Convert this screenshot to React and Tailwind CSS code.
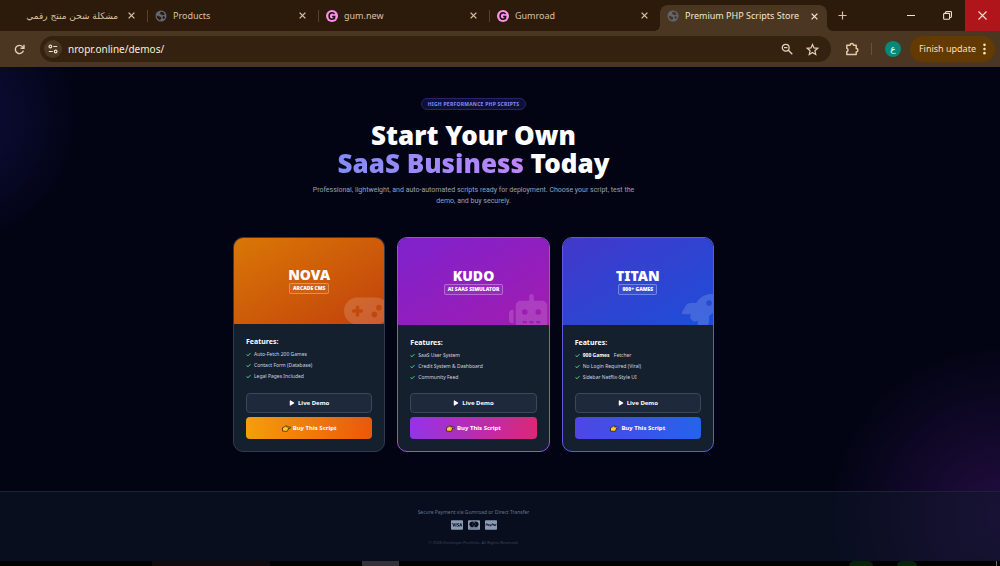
import React from "react";
import {
  FaGamepad,
  FaRobot,
  FaRocket,
  FaCheck,
  FaPlay,
  FaCcVisa,
  FaCcMastercard,
  FaCcPaypal,
} from "react-icons/fa6";

function CloseGlyph({ className = "size-[7px]" }) {
  return (
    <svg viewBox="0 0 8 8" className={className} fill="none" stroke="currentColor" strokeWidth="1.5">
      <path d="M0.7 0.7 7.3 7.3M7.3 0.7 0.7 7.3" />
    </svg>
  );
}

function GlobeIcon() {
  return (
    <svg viewBox="0 0 24 24" className="size-[12px] shrink-0" fill="#5f6873">
      <path d="M12 1a11 11 0 1 0 0 22 11 11 0 0 0 0-22zM3.5 10.5c1.500 1.800 3.500 2 5 2.200 1.300.3 1.700 1.300 3 1.500 1.500.4 1.600 1.500.6 2.600-.8.9-1 1.900-1.600 3.500C6 19.500 3 15.500 3.500 10.500zM13 3.600c3 .3 5.600 2.400 6.800 5.200-1.300 1.200-2.600.4-3.800 1.200-1.300 1-2.500.3-3.400-.8-.7-1-2.400-.6-2.800-2C9.400 5.500 11 4 13 3.600zM15.500 13c1.700-.8 3.300-.3 4.800 1-.6 1.800-1.800 3.400-3.400 4.500-1.200-1.500-2.600-4-1.400-5.500z" fillRule="evenodd" />
    </svg>
  );
}

function GumroadIcon() {
  return (
    <svg viewBox="0 0 24 24" className="size-[12px] shrink-0">
      <circle cx="12" cy="12" r="12" fill="#ff90e8" />
      <path d="M17 8.200C16 6.300 14.300 5.400 12.300 5.400 8.700 5.400 6.200 8.200 6.200 12s2.300 6.600 5.800 6.600c3 0 4.800-2 5.300-5.800h-5" fill="none" stroke="#1a0b16" strokeWidth="3" />
      <path d="M17.300 13v5.500" stroke="#1a0b16" strokeWidth="2" />
    </svg>
  );
}

const tabs = [
  { title: "Products", Icon: GlobeIcon },
  { title: "gum.new", Icon: GumroadIcon },
  { title: "Gumroad", Icon: GumroadIcon },
];

function TabStrip() {
  return (
    <div className="flex h-[31px] bg-[#2c1b0b] text-[9px] text-[#dcc0a0]">
      <div className="flex w-[147px] items-center justify-end gap-[10px] pr-[12px]">
        <span dir="rtl" lang="ar" className="truncate font-['DejaVu_Sans','Noto_Sans',sans-serif] leading-[16px]">
          مشكلة شحن منتج رقمي
        </span>
        <button aria-label="Close tab"><CloseGlyph /></button>
      </div>
      {tabs.map(({ title, Icon }) => (
        <div key={title} className="flex w-[171px] min-w-0 items-center">
          <span className="h-[12px] w-px bg-[#5a4228]" />
          <div className="flex min-w-0 flex-1 items-center gap-[6px] pr-[12px] pl-[7px]">
            <Icon />
            <span className="flex-1 truncate">{title}</span>
            <button aria-label={"Close " + title}><CloseGlyph /></button>
          </div>
        </div>
      ))}
      <div className="flex w-[167px] min-w-0 items-end">
        <div className="relative flex h-[26px] min-w-0 flex-1 items-center gap-[6px] rounded-t-[8px] bg-[#4b3621] pr-[9px] pb-[4px] pl-[7px] text-[#f3e4d3]">
          <span className="absolute bottom-0 left-[-6px] size-[6px] bg-[radial-gradient(circle_at_0_0,transparent_6px,#4b3621_6px)]" />
          <span className="absolute right-[-6px] bottom-0 size-[6px] bg-[radial-gradient(circle_at_100%_0,transparent_6px,#4b3621_6px)]" />
          <GlobeIcon />
          <span className="flex-1 whitespace-nowrap">Premium PHP Scripts Store</span>
          <button aria-label="Close Premium PHP Scripts Store"><CloseGlyph /></button>
        </div>
      </div>
      <button aria-label="New tab" className="ml-[11px]">
        <svg viewBox="0 0 10 10" className="size-[9px]" fill="none" stroke="currentColor" strokeWidth="1.300">
          <path d="M5 0.500v9M0.500 5h9" />
        </svg>
      </button>
      <div className="ml-auto flex text-[#f0e0d0]">
        <button aria-label="Minimize" className="flex w-[36px] items-center justify-center">
          <span className="h-px w-[8px] bg-current" />
        </button>
        <button aria-label="Restore" className="flex w-[36px] items-center justify-center">
          <svg viewBox="0 0 10 10" className="size-[9px]" fill="none" stroke="currentColor" strokeWidth="1.200">
            <rect x="0.700" y="2.600" width="6.600" height="6.600" rx="1" />
            <path d="M2.800 2.600V1.600a1 1 0 0 1 1-1h4.600a1 1 0 0 1 1 1v4.600a1 1 0 0 1-1 1h-1" />
          </svg>
        </button>
        <button aria-label="Close" className="flex w-[35px] items-center justify-center bg-[#b0151b]">
          <svg viewBox="0 0 9 9" className="size-[9px]" fill="none" stroke="currentColor" strokeWidth="1.100">
            <path d="M0.500 0.500 8.500 8.500M8.500 0.500 0.500 8.500" />
          </svg>
        </button>
      </div>
    </div>
  );
}

function Toolbar() {
  return (
    <div className="flex h-[36px] items-center bg-[#4b3621] pr-[5px] pl-[14px] text-[#dcc0a0]">
      <button aria-label="Reload" className="shrink-0">
        <svg viewBox="0 0 12 12" className="size-[11px]" fill="none" stroke="#e6d0b8" strokeWidth="1.500">
          <path d="M10.300 7.200A4.500 4.500 0 1 1 9.300 2.900L10.600 4.300" />
          <path d="M10.900 0.800v3.800H7.100" />
        </svg>
      </button>
      <div className="ml-[15px] flex h-[26px] flex-1 items-center rounded-full bg-[#34210f] pr-[12px] pl-[4px]">
        <button aria-label="View site information" className="flex size-[18px] shrink-0 items-center justify-center rounded-full bg-[#4b3621]">
          <svg viewBox="0 0 12 12" className="size-[10px]" fill="none" stroke="#f0e0d0" strokeWidth="1.400">
            <circle cx="2.800" cy="3" r="1.600" />
            <path d="M6.300 3H11M1 9h4.700" />
            <circle cx="9.200" cy="9" r="1.600" />
          </svg>
        </button>
        <input
          aria-label="Address"
          defaultValue="nropr.online/demos/"
          className="ml-[6px] min-w-0 flex-1 bg-transparent text-[10px] text-[#fbeede] outline-none"
        />
        <button aria-label="Zoom" className="shrink-0">
          <svg viewBox="0 0 12 12" className="size-[12px]" fill="none" stroke="#e6d0b8" strokeWidth="1.300">
            <circle cx="4.700" cy="4.700" r="3.400" />
            <path d="M7.300 7.300 11.300 11.300M3 4.700h3.400" />
          </svg>
        </button>
        <button aria-label="Bookmark" className="ml-[13px] shrink-0">
          <svg viewBox="0 0 24 24" className="size-[13px]" fill="none" stroke="#e6d0b8" strokeWidth="2.200">
            <path d="M12 2.800l2.800 6.300 6.900.7-5.200 4.600 1.500 6.800-6-3.600-6 3.600 1.500-6.800L2.300 9.800l6.900-.7z" />
          </svg>
        </button>
      </div>
      <button aria-label="Extensions" className="ml-[14px] shrink-0">
        <svg viewBox="0 0 14 14" className="size-[14px]" fill="none" stroke="#e6c8a4" strokeWidth="1.500">
          <path d="M1.800 3.200h3.300a1.700 1.700 0 0 1 3.400 0H11.200v3.300a1.700 1.700 0 0 1 0 3.400v2.700H1.800V9.700a1.800 1.800 0 0 0 0-3.400z" strokeLinejoin="round" />
        </svg>
      </button>
      <span className="ml-[12px] h-[12px] w-px bg-[#6b5237]" />
      <button aria-label="Profile" className="ml-[13px] flex size-[16px] shrink-0 items-center justify-center rounded-full bg-[#06897a] font-['DejaVu_Sans',sans-serif] text-[9px] leading-[9px] text-white">
        ع
      </button>
      <button className="ml-[9px] flex h-[26px] shrink-0 items-center gap-[7px] rounded-full bg-[#633a02] pr-[9px] pl-[9px] text-[9px] text-[#ffdfb5]">
        Finish update
        <svg viewBox="0 0 3 13" className="h-[12px] w-[3px]" fill="#ffdfb5">
          <circle cx="1.500" cy="2" r="1.400" />
          <circle cx="1.500" cy="6.500" r="1.400" />
          <circle cx="1.500" cy="11" r="1.400" />
        </svg>
      </button>
    </div>
  );
}

function PointingHand() {
  return (
    <svg viewBox="0 0 18 14" className="h-[7px] w-[9px] shrink-0" stroke="#1c1408" strokeWidth="1.400" strokeLinejoin="round">
      <path d="M1 5.500 5 3.500 8 1.500c1.400-.6 2.200.4 1.600 1.700L9 4h7c1.500 0 1.500 2.500 0 2.500h-4c1.200.6 1 2-.1 2.200.8.800.5 1.800-.5 2 .3 1-.3 1.800-1.400 1.800H5L1 12z" fill="#ffc928" />
    </svg>
  );
}

const products = [
  {
    name: "NOVA",
    label: "ARCADE CMS",
    Icon: FaGamepad,
    iconSize: "w-[45px]",
    border: "border-[#2f3c4e]",
    header: "h-[86px] from-[#d97706] to-[#c2410c]",
    buy: "from-[#f59e0b] to-[#ea580c]",
    features: ["Auto-Fetch 200 Games", "Contact Form (Database)", "Legal Pages Included"],
  },
  {
    name: "KUDO",
    label: "AI SAAS SIMULATOR",
    Icon: FaRobot,
    iconSize: "w-[45px]",
    border: "border-[#9a4fe0]",
    header: "h-[87px] from-[#7e22ce] to-[#a21caf]",
    buy: "from-[#9333ea] to-[#db2777]",
    features: ["SaaS User System", "Credit System & Dashboard", "Community Feed"],
  },
  {
    name: "TITAN",
    label: "900+ GAMES",
    Icon: FaRocket,
    iconSize: "w-[36px]",
    border: "border-[#5a5ce0]",
    header: "h-[87px] from-[#4338ca] to-[#1d4ed8]",
    buy: "from-[#4f46e5] to-[#2563eb]",
    features: [
      <><b className="mr-[3px] font-bold text-white">900 Games</b> Fetcher</>,
      "No Login Required (Viral)",
      "Sidebar Netflix-Style UI",
    ],
  },
];

function ProductCard({ name, label, Icon, iconSize, border, header, buy, features }) {
  return (
    <article className={"flex flex-col overflow-hidden rounded-[10px] border bg-[#15202f] " + border}>
      <div className={"relative flex flex-col items-center justify-center overflow-hidden bg-linear-to-br/srgb pb-[2px] " + header}>
        <h2 className="text-[14px] leading-[17px] font-black text-white">{name}</h2>
        <span className="rounded-[2px] border border-white/30 bg-white/5 px-[3px] text-[5px] leading-[9px] font-black text-white">
          {label}
        </span>
        <Icon className={"absolute right-[-5px] bottom-[-5px] h-[36px] text-white opacity-15 " + iconSize} />
      </div>
      <div className="flex flex-1 flex-col px-[12px] pt-[12px] pb-[12px]">
        <h3 className="text-[7px] leading-[11px] font-bold text-white">Features:</h3>
        <ul className="mt-[2px] mb-[10px] text-[5px] leading-[11px] text-[#cbd5e1]">
          {features.map((f, i) => (
            <li key={i} className="flex items-center gap-[3px]">
              <FaCheck className="size-[5px] shrink-0 text-[#4ade80]" />
              <span className="whitespace-nowrap">{f}</span>
            </li>
          ))}
        </ul>
        <a href="#demo" className="mt-auto flex h-[20px] items-center justify-center gap-[3px] rounded-[4px] border border-[#3a4759] bg-[#1e293b] text-[6px] font-bold text-white">
          <FaPlay className="size-[6px]" /> Live Demo
        </a>
        <a href="#buy" className={"mt-[4px] flex h-[22px] items-center justify-center gap-[2px] rounded-[4px] bg-linear-to-r/srgb text-[6px] font-bold text-white " + buy}>
          <PointingHand /> Buy This Script
        </a>
      </div>
    </article>
  );
}

export default function App() {
  return (
    <div className="flex min-h-screen flex-col bg-[#020414] font-['Noto_Sans','Open_Sans',sans-serif]">
      <header>
        <TabStrip />
        <Toolbar />
      </header>
      <div className="flex flex-1 flex-col bg-[radial-gradient(circle_130px_at_-50px_50px,#100f42,transparent),radial-gradient(circle_170px_at_100%_450px,#220d40,transparent)]">
        <main className="flex flex-1 flex-col items-center pt-[31px] pr-[53px] pb-[39px]">
          <span className="rounded-full border border-[#27246b] bg-[#0e1038] px-[6px] text-[5px] leading-[10px] font-bold tracking-wider text-[#818cf8]">
            HIGH PERFORMANCE PHP SCRIPTS
          </span>
          <h1 className="mt-[11px] text-center text-[26px] leading-[28px] font-black text-white">
            Start Your Own
            <br />
            <span className="bg-linear-to-r/srgb from-[#818cf8] to-[#c084fc] bg-clip-text text-transparent">SaaS Business</span> Today
          </h1>
          <p className="mt-[8px] w-[330px] text-center font-['Roboto','Noto_Sans',sans-serif] text-[7px] leading-[11px] text-[#94a3b8]">
            Professional, lightweight, and auto-automated scripts ready for deployment. Choose your script, test the demo, and buy securely.
          </p>
          <section className="mt-[30px] grid w-full max-w-[481px] grid-cols-3 gap-[12px]">
            {products.map((p) => (
              <ProductCard key={p.name} {...p} />
            ))}
          </section>
        </main>
        <footer className="flex flex-col items-center border-t border-[#1a2334] bg-[#0f172a]/50 pt-[15px] pr-[53px] pb-[13px]">
          <p className="text-[5px] leading-[11px] text-[#64748b]">Secure Payment via Gumroad or Direct Transfer</p>
          <div className="mt-px flex gap-[5px] text-[12px] text-[#8b9bb4]">
            <FaCcVisa />
            <FaCcMastercard />
            <FaCcPaypal />
          </div>
          <p className="mt-[6px] text-[4px] leading-[11px] text-[#3b475a]">© 2026 Developer Portfolio. All Rights Reserved.</p>
        </footer>
      </div>
      <div className="flex h-[5px] bg-black">
        <span className="ml-[152px] w-[118px] bg-[#110b0b]" />
        <span className="ml-[92px] w-[37px] bg-[#343236]" />
        <span className="ml-auto w-[24px] rounded-t-full bg-[#052408]" />
        <span className="ml-[24px] w-[20px] rounded-t-full bg-[#052408]" />
        <span className="mr-[3px] ml-[79px] w-px bg-[#6b6b6b]" />
      </div>
    </div>
  );
}
